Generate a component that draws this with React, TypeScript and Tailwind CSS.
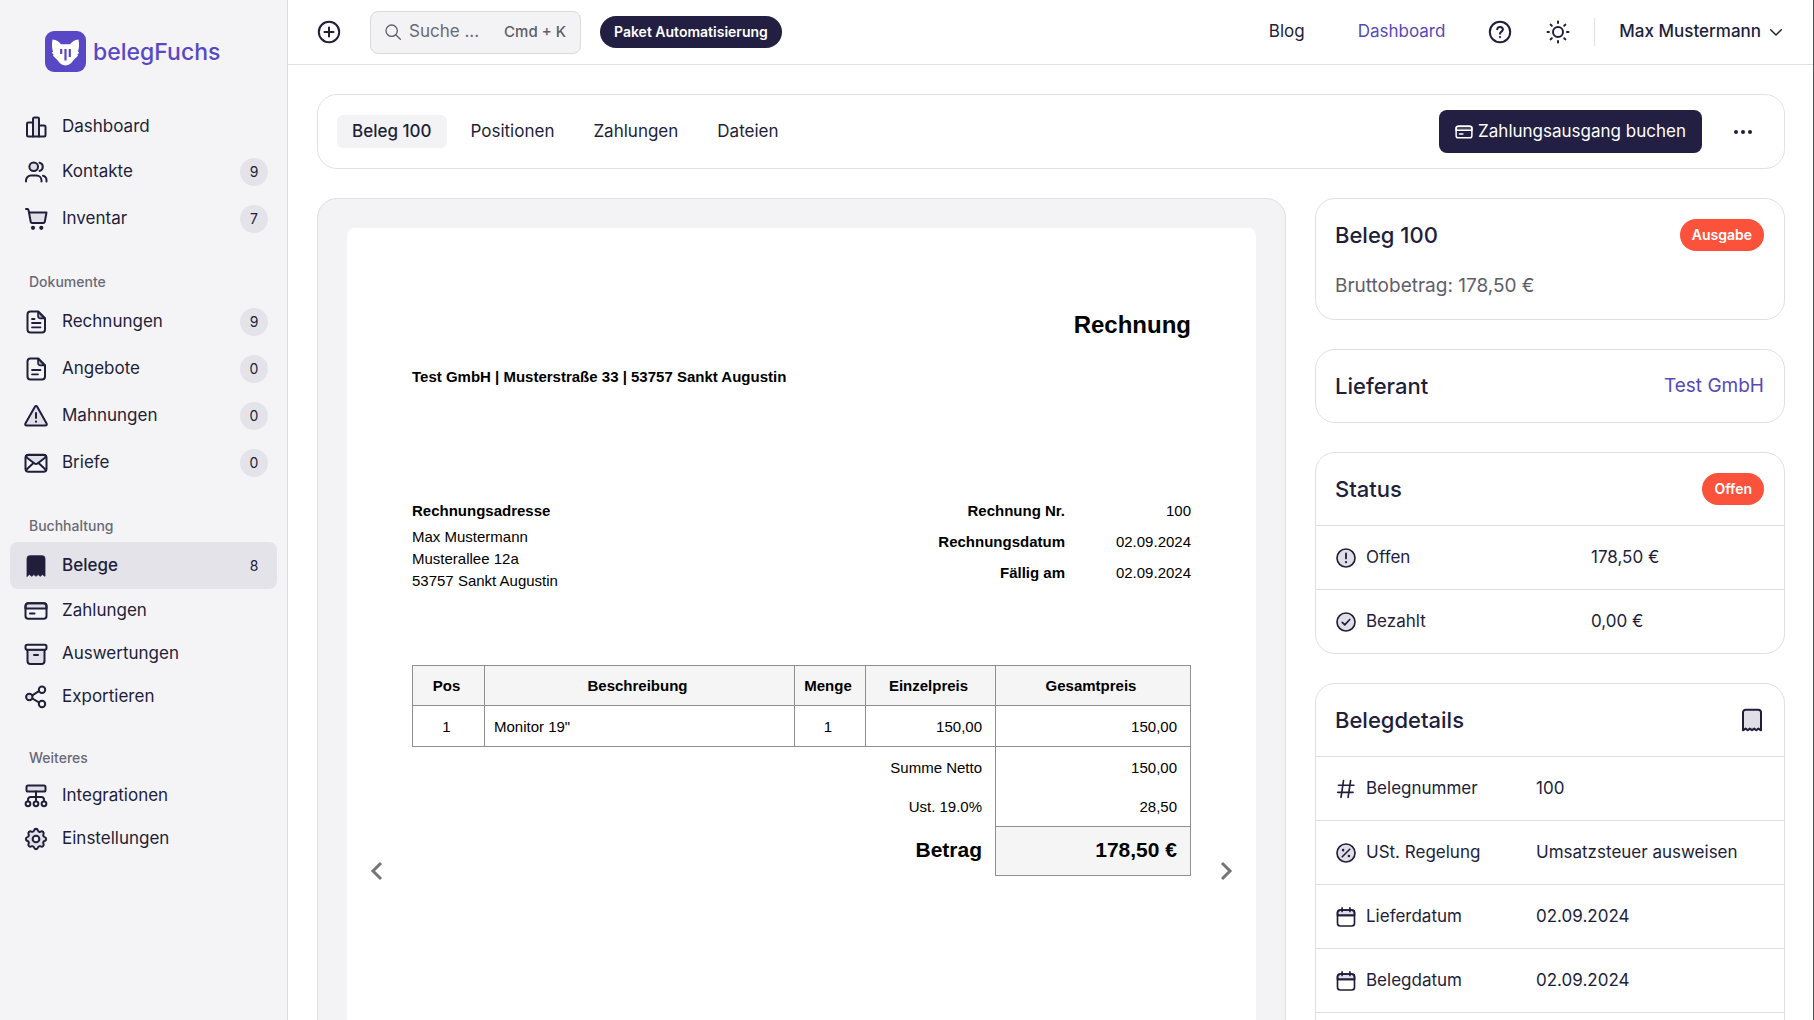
import type { ReactNode } from 'react'

type IconProps = {
  children: ReactNode
  className?: string
}

type NavItem = {
  label: string
  icon: ReactNode
  count?: number
  active?: boolean
}

type NavGroup = {
  title?: string
  items: NavItem[]
}

const Icon = ({ children, className = 'size-6' }: IconProps) => (
  <svg
    viewBox="0 0 24 24"
    fill="none"
    stroke="currentColor"
    strokeWidth={2}
    strokeLinecap="round"
    strokeLinejoin="round"
    aria-hidden="true"
    className={`shrink-0 ${className}`}
  >
    {children}
  </svg>
)

const soft = '#e0dfe7'

const ChartIcon = () => (
  <Icon>
    <path d="M9 3.8a1.3 1.3 0 0 1 1.3-1.3h3.4A1.3 1.3 0 0 1 15 3.8V21.500H9z" fill={soft} />
    <path d="M9 7.500H4.300A1.300 1.300 0 0 0 3 8.800v11.400a1.300 1.300 0 0 0 1.300 1.300H9zM15 10.500h5a1.500 1.500 0 0 1 1.500 1.500v8a1.500 1.500 0 0 1-1.500 1.500h-5z" />
  </Icon>
)

const UsersIcon = () => (
  <Icon>
    <circle cx="9.7" cy="6.8" r="4.3" fill={soft} />
    <path d="M2 21.500v-1a5 5 0 0 1 5-5h5.500a5 5 0 0 1 5 5v1M15.500 2.700a4.200 4.200 0 0 1 0 8.200M19 15.700a4.600 4.600 0 0 1 3.500 4.500v1.300" />
  </Icon>
)

const CartIcon = () => (
  <Icon>
    <path d="M5 5.500h17.500l-1.700 9.300a1.500 1.500 0 0 1-1.500 1.200H8.200a1.500 1.500 0 0 1-1.500-1.200z" fill={soft} />
    <path d="M2 2h1.400a1 1 0 0 1 1 .8L5 5.500" />
    <circle cx="9" cy="20.8" r="1.1" fill="currentColor" />
    <circle cx="17.3" cy="20.8" r="1.1" fill="currentColor" />
  </Icon>
)

const FileIcon = ({ full = false }: { full?: boolean }) => (
  <Icon>
    <path d="M6.500 1.500h7.800L21 8.200v11.300a3 3 0 0 1-3 3H6.500a3 3 0 0 1-3-3v-15a3 3 0 0 1 3-3z" />
    <path d="M14 1.800v4.400A2.200 2.200 0 0 0 16.200 8.400h4.500z" fill="#a9a7b8" strokeWidth={1.6} />
    {full && <path d="M8 9h2.500" strokeWidth={1.8} />}
    <path d={full ? 'M8 13h8.500M8 17.300h8.500' : 'M8 13h8.500M8 17.300h6'} strokeWidth={1.8} />
  </Icon>
)

const WarningIcon = () => (
  <Icon>
    <path d="M10.900 2.700a1.300 1.300 0 0 1 2.300 0l9.400 16.800a1.300 1.300 0 0 1-1.200 2H2.600a1.300 1.300 0 0 1-1.200-2z" fill={soft} />
    <path d="M12 9v5" />
    <path d="M12 17.600v.1" strokeWidth={2.2} />
  </Icon>
)

const MailIcon = () => (
  <Icon>
    <path d="M2 6l8.500 6.500a2.500 2.500 0 0 0 3 0L22 6a2.500 2.500 0 0 0-2.500-2h-15A2.500 2.500 0 0 0 2 6z" fill={soft} />
    <rect x="1.5" y="3.8" width="21" height="17" rx="3" />
    <path d="M2 19l7.500-7M22 19l-7.500-7" />
  </Icon>
)

const ReceiptIcon = ({ solid = false }: { solid?: boolean }) => (
  <Icon>
    <path
      d="M3 22.300V4.500A2.800 2.800 0 0 1 5.800 1.700h12.400A2.800 2.800 0 0 1 21 4.500v17.800l-2.600-1.700-2.200 1.700-2.100-1.700-2.100 1.700-2.100-1.700-2.100 1.700-2.200-1.700z"
      fill={solid ? 'currentColor' : soft}
      strokeWidth={solid ? 0.8 : 2}
    />
  </Icon>
)

const CardIcon = ({ className, tint = soft }: { className?: string; tint?: string }) => (
  <Icon className={className}>
    <path d="M4.300 4.300h15.400a2.800 2.800 0 0 1 2.800 2.800v2.500h-21V7.100a2.800 2.800 0 0 1 2.800-2.800z" fill={tint} />
    <rect x="1.500" y="4.300" width="21" height="15.400" rx="2.800" />
    <path d="M6 14.500h4.500" />
  </Icon>
)

const ArchiveIcon = () => (
  <Icon>
    <path d="M3.500 7.500h17V19a3 3 0 0 1-3 3h-11a3 3 0 0 1-3-3z" fill={soft} />
    <rect x="1.500" y="2.700" width="21" height="5" rx="1.800" fill="#f4f4f6" />
    <path d="M10 13h4" />
  </Icon>
)

const ShareIcon = () => (
  <Icon>
    <path d="M8.300 10.400l6.600-4.300M8.300 13.500l6.600 3.900" />
    <circle cx="5.300" cy="12" r="3.200" fill={soft} />
    <circle cx="18" cy="4.700" r="3.200" />
    <circle cx="18" cy="19" r="3.200" />
  </Icon>
)

const NetworkIcon = () => (
  <Icon>
    <rect x="2.500" y="1.500" width="19" height="6" rx="1.600" fill={soft} />
    <path d="M12 7.500v9M4 17v-1.200A2.800 2.800 0 0 1 6.800 13h10.400a2.800 2.800 0 0 1 2.800 2.800V17" />
    <circle cx="4" cy="19.800" r="2.400" />
    <circle cx="12" cy="19.800" r="2.400" />
    <circle cx="20" cy="19.800" r="2.400" />
  </Icon>
)

const GearIcon = () => (
  <Icon>
    <g transform="translate(12 12) scale(1.12) translate(-12 -12)" strokeWidth={1.8}>
      <path
        d="M10.300 4.300a1.750 1.750 0 0 1 3.400 0 1.720 1.720 0 0 0 2.600 1.070 1.750 1.750 0 0 1 2.370 2.370 1.720 1.720 0 0 0 1.060 2.570 1.750 1.750 0 0 1 0 3.400 1.720 1.720 0 0 0-1.060 2.570 1.750 1.750 0 0 1-2.370 2.370 1.720 1.720 0 0 0-2.570 1.060 1.750 1.750 0 0 1-3.400 0 1.720 1.720 0 0 0-2.570-1.060 1.750 1.750 0 0 1-2.370-2.370 1.720 1.720 0 0 0-1.060-2.570 1.750 1.750 0 0 1 0-3.400 1.720 1.720 0 0 0 1.060-2.570 1.750 1.750 0 0 1 2.370-2.370 1.720 1.720 0 0 0 2.540-1.070z"
        fill={soft}
      />
      <circle cx="12" cy="12" r="3" fill="#f4f4f6" />
    </g>
  </Icon>
)

const CalendarIcon = () => (
  <Icon className="size-5">
    <path d="M5 3.800h14A3.200 3.200 0 0 1 22.200 7v3H1.800V7A3.200 3.200 0 0 1 5 3.800z" fill={soft} />
    <rect x="1.800" y="3.800" width="20.400" height="19" rx="3.200" />
    <path d="M7.300 1v4.500M16.700 1v4.500M2 10h20" />
  </Icon>
)

const CircleIcon = ({ children }: { children: ReactNode }) => (
  <Icon className="size-5">
    <circle cx="12" cy="12" r="10.800" fill={soft} />
    {children}
  </Icon>
)

const navGroups: NavGroup[] = [
  {
    items: [
      { label: 'Dashboard', icon: <ChartIcon /> },
      { label: 'Kontakte', icon: <UsersIcon />, count: 9 },
      { label: 'Inventar', icon: <CartIcon />, count: 7 },
    ],
  },
  {
    title: 'Dokumente',
    items: [
      { label: 'Rechnungen', icon: <FileIcon full />, count: 9 },
      { label: 'Angebote', icon: <FileIcon />, count: 0 },
      { label: 'Mahnungen', icon: <WarningIcon />, count: 0 },
      { label: 'Briefe', icon: <MailIcon />, count: 0 },
    ],
  },
  {
    title: 'Buchhaltung',
    items: [
      { label: 'Belege', icon: <ReceiptIcon solid />, count: 8, active: true },
      { label: 'Zahlungen', icon: <CardIcon /> },
      { label: 'Auswertungen', icon: <ArchiveIcon /> },
      { label: 'Exportieren', icon: <ShareIcon /> },
    ],
  },
  {
    title: 'Weiteres',
    items: [
      { label: 'Integrationen', icon: <NetworkIcon /> },
      { label: 'Einstellungen', icon: <GearIcon /> },
    ],
  },
]

const Logo = () => (
  <a href="#" className="flex items-center gap-[7px] pl-[35px] text-[#5848c6]">
    <svg viewBox="0 0 41 41" className="size-[41px]" aria-hidden="true">
      <rect width="41" height="41" rx="9" fill="#5848c6" />
      <path
        d="M7.500 8.500c4 .4 6.500 2 8.500 4.800h9c2-2.800 4.700-4.400 8.500-4.800.8 4.500.7 8.500-.5 12l1.200 1.200-1.800 1.800.6 1c-1.500 2-3.400 3.300-4.600 4.800-1.800 3-4.500 5.200-7.900 5.200s-6.100-2.200-7.900-5.200c-1.200-1.500-3.100-2.800-4.600-4.800l.6-1-1.800-1.800L8 20.500c-1.200-3.500-1.300-7.500-.5-12z"
        fill="#fff"
      />
      <path d="M16.200 18v5M20.500 18v11.500M24.800 18v8" stroke="#5848c6" strokeWidth="2.2" />
    </svg>
    <span className="text-[23px] leading-[30px] font-medium">belegFuchs</span>
  </a>
)

const Sidebar = () => (
  <aside className="w-72 shrink-0 border-r border-[#d9d9df] bg-[#f4f4f6] px-2.5 pt-[31px]">
    <Logo />
    <nav className="mt-[33px]">
      {navGroups.map((group, i) => (
        <div key={i}>
          {group.title && (
            <h2 className="px-[19px] pt-[29px] pb-[5px] text-sm leading-[22px] font-medium text-[#6a6977]">{group.title}</h2>
          )}
          <ul>
            {group.items.map((item) => (
              <li key={item.label}>
                <a
                  href="#"
                  className={`flex items-center gap-3.5 rounded-lg pr-[9px] pl-3.5 ${
                    item.count === undefined ? 'h-[43px]' : 'h-[47px]'
                  } ${item.active ? 'bg-[#e4e3e9] font-medium' : ''}`}
                >
                  {item.icon}
                  <span className="flex-1">{item.label}</span>
                  {item.count !== undefined && (
                    <span className="flex size-7 items-center justify-center rounded-full bg-[#e4e3e9] text-sm font-normal">
                      {item.count}
                    </span>
                  )}
                </a>
              </li>
            ))}
          </ul>
        </div>
      ))}
    </nav>
  </aside>
)

const Header = () => (
  <header className="flex h-[65px] items-center justify-between border-b border-[#dfe2e4] pr-[29px] pl-[29px]">
    <div className="flex items-center">
      <button type="button" aria-label="Neu">
        <Icon>
          <circle cx="12" cy="12" r="10.200" />
          <path d="M12 7.500v9M7.500 12h9" />
        </Icon>
      </button>
      <label className="ml-[29px] flex h-[43px] w-[211px] items-center rounded-lg border border-[#dadade] bg-[#f3f3f5] px-3.5 text-[#5f5e6b]">
        <Icon className="size-4">
          <circle cx="10" cy="10" r="8.500" />
          <path d="M16.500 16.500L23 23" />
        </Icon>
        <input
          type="search"
          aria-label="Suche"
          placeholder="Suche ..."
          className="ml-2 w-0 flex-1 bg-transparent outline-none placeholder:text-[#6a6977]"
        />
        <kbd className="text-[15px] font-medium [font-family:Inter,sans-serif]">Cmd + K</kbd>
      </label>
      <button type="button" className="ml-[19px] h-8 rounded-full bg-[#221f43] px-3.5 text-sm font-semibold text-white">
        Paket Automatisierung
      </button>
    </div>
    <div className="flex items-center">
      <a href="#">Blog</a>
      <a href="#" className="ml-[53px] text-[#5848b8]">
        Dashboard
      </a>
      <button type="button" aria-label="Hilfe" className="ml-[43px]">
        <Icon>
          <circle cx="12" cy="12" r="10.200" />
          <path d="M9.200 9.300c.3-1.500 1.400-2.300 2.800-2.300 1.600 0 2.900 1 2.900 2.500 0 2-2.900 2.200-2.900 4.200" />
          <path d="M12 17v.1" strokeWidth={2.2} />
        </Icon>
      </button>
      <button type="button" aria-label="Farbschema" className="ml-[34px]">
        <Icon>
          <circle cx="12" cy="12" r="5" />
          <path d="M12 1.500v1.500M12 21v1.500M1.500 12H3M21 12h1.500M4.600 4.600l1.200 1.200M18.200 18.200l1.200 1.200M19.400 4.600l-1.200 1.200M5.800 18.200l-1.200 1.200" />
        </Icon>
      </button>
      <button type="button" className="ml-6 flex h-7 items-center border-l border-[#dfe2e4] pl-6 font-medium">
        Max Mustermann
        <Icon className="ml-[7px] size-4">
          <path d="M4 8.500l8 8 8-8" strokeWidth={2.2} />
        </Icon>
      </button>
    </div>
  </header>
)

const tabs = ['Beleg 100', 'Positionen', 'Zahlungen', 'Dateien']

const Toolbar = () => (
  <div className="flex h-[75px] items-center justify-between rounded-[20px] border border-[#e0e2e4] pr-5 pl-[19px]">
    <nav className="flex gap-[9px]">
      {tabs.map((tab, i) => (
        <a key={tab} href="#" className={`rounded-md px-[15px] py-1 leading-[25px] ${i === 0 ? 'bg-[#f3f3f5] font-medium' : ''}`}>
          {tab}
        </a>
      ))}
    </nav>
    <div className="flex items-center">
      <button type="button" className="flex h-[43px] items-center gap-[5px] rounded-lg bg-[#221f43] px-4 text-white">
        <CardIcon className="size-[18px]" tint="#4b4868" />
        Zahlungsausgang buchen
      </button>
      <button type="button" aria-label="Mehr" className="ml-[30px] mr-2.5">
        <svg viewBox="0 0 22 22" className="size-[22px]" fill="currentColor" aria-hidden="true">
          <circle cx="4" cy="11" r="2" />
          <circle cx="11" cy="11" r="2" />
          <circle cx="18" cy="11" r="2" />
        </svg>
      </button>
    </div>
  </div>
)

const invoiceMeta = [
  ['Rechnung Nr.', '100'],
  ['Rechnungsdatum', '02.09.2024'],
  ['Fällig am', '02.09.2024'],
]

const cell = 'border border-[#8f8f8f] pr-[13px] pl-[9px] pt-[2px]'

const Invoice = () => (
  <article className="relative aspect-[210/297] rounded-lg bg-white px-[65px] pt-[81px] text-[15px] text-black [font-family:'Liberation_Sans',Arial,sans-serif]">
    <h1 className="text-right text-2xl leading-8 font-bold">Rechnung</h1>
    <p className="mt-[25px] leading-[22px] font-bold">Test GmbH | Musterstraße 33 | 53757 Sankt Augustin</p>

    <div className="mt-28 flex items-start justify-between">
      <address className="leading-[22px] not-italic">
        <strong className="mb-1 block">Rechnungsadresse</strong>
        Max Mustermann
        <br />
        Musterallee 12a
        <br />
        53757 Sankt Augustin
      </address>
      <dl className="grid grid-cols-[auto_126px] gap-y-[9px] text-right leading-[22px]">
        {invoiceMeta.map(([label, value]) => (
          <div key={label} className="contents">
            <dt className="font-bold">{label}</dt>
            <dd>{value}</dd>
          </div>
        ))}
      </dl>
    </div>

    <table className="mt-[73px] w-full table-fixed border-collapse">
      <colgroup>
        <col className="w-[72px]" />
        <col />
        <col className="w-[71px]" />
        <col className="w-[130px]" />
        <col className="w-[195px]" />
      </colgroup>
      <thead>
        <tr className="h-10 bg-[#f5f5f5]">
          {['Pos', 'Beschreibung', 'Menge', 'Einzelpreis', 'Gesamtpreis'].map((title) => (
            <th key={title} className={cell}>
              {title}
            </th>
          ))}
        </tr>
      </thead>
      <tbody>
        <tr className="h-[41px]">
          <td className={`${cell} text-center`}>1</td>
          <td className={cell}>Monitor 19&quot;</td>
          <td className={`${cell} text-center`}>1</td>
          <td className={`${cell} text-right`}>150,00</td>
          <td className={`${cell} text-right`}>150,00</td>
        </tr>
      </tbody>
      <tfoot className="text-right">
        <tr className="h-10">
          <td colSpan={4} className="pt-0.5 pr-[13px]">
            Summe Netto
          </td>
          <td className="border-x border-[#8f8f8f] pt-0.5 pr-[13px]">150,00</td>
        </tr>
        <tr className="h-10">
          <td colSpan={4} className="pt-0.5 pr-[13px]">
            Ust. 19.0%
          </td>
          <td className="border-x border-[#8f8f8f] pt-0.5 pr-[13px]">28,50</td>
        </tr>
        <tr className="h-[49px] text-[21px] font-bold">
          <td colSpan={4} className="pr-[13px] pb-0.5">
            Betrag
          </td>
          <td className="border border-[#8f8f8f] bg-[#f5f5f5] pr-[13px] pb-0.5">178,50 €</td>
        </tr>
      </tfoot>
    </table>

    <button type="button" aria-label="Zurück" className="absolute top-1/2 left-5 -translate-y-1/2 text-[#757575]">
      <svg viewBox="0 0 20 20" className="size-5" fill="none" stroke="currentColor" strokeWidth="3" aria-hidden="true">
        <path d="M14 2l-8 8 8 8" />
      </svg>
    </button>
    <button type="button" aria-label="Weiter" className="absolute top-1/2 right-5 -translate-y-1/2 text-[#757575]">
      <svg viewBox="0 0 20 20" className="size-5" fill="none" stroke="currentColor" strokeWidth="3" aria-hidden="true">
        <path d="M6 2l8 8-8 8" />
      </svg>
    </button>
  </article>
)

const Card = ({ children, className = '' }: { children: ReactNode; className?: string }) => (
  <section className={`rounded-[20px] border border-[#dfe0e4] bg-white ${className}`}>{children}</section>
)

const CardHeader = ({ title, children }: { title: string; children: ReactNode }) => (
  <div className="flex h-[72px] items-center justify-between pr-5 pl-[19px]">
    <h2 className="text-[22px] leading-7 font-medium">{title}</h2>
    {children}
  </div>
)

const Badge = ({ children }: { children: ReactNode }) => (
  <span className="rounded-full bg-[#fb523b] px-3 py-1.5 text-sm font-semibold text-white">{children}</span>
)

type RowProps = {
  icon: ReactNode
  label: string
  value: string
  labelClass: string
}

const Row = ({ icon, label, value, labelClass }: RowProps) => (
  <div className="flex h-16 items-center border-t border-[#dfe0e4] px-5">
    <dt className={`flex shrink-0 items-center gap-2.5 ${labelClass}`}>
      {icon}
      {label}
    </dt>
    <dd>{value}</dd>
  </div>
)

const Details = () => (
  <aside className="flex w-[470px] shrink-0 flex-col gap-[29px]">
    <Card className="h-[122px]">
      <CardHeader title="Beleg 100">
        <Badge>Ausgabe</Badge>
      </CardHeader>
      <p className="px-[19px] text-[19px] leading-[30px] text-[#5f5e6b]">Bruttobetrag: 178,50 €</p>
    </Card>

    <Card>
      <CardHeader title="Lieferant">
        <a href="#" className="text-[19px] text-[#5848b8]">
          Test GmbH
        </a>
      </CardHeader>
    </Card>

    <Card>
      <CardHeader title="Status">
        <Badge>Offen</Badge>
      </CardHeader>
      <dl>
        <Row
          label="Offen"
          value="178,50 €"
          labelClass="w-[255px]"
          icon={
            <CircleIcon>
              <path d="M12 6.500v6" strokeWidth={2.2} />
              <path d="M12 17v.1" strokeWidth={2.6} />
            </CircleIcon>
          }
        />
        <Row
          label="Bezahlt"
          value="0,00 €"
          labelClass="w-[255px]"
          icon={
            <CircleIcon>
              <path d="M7.500 12.500l3 3 6-6.500" />
            </CircleIcon>
          }
        />
      </dl>
    </Card>

    <Card className="flex-1">
      <CardHeader title="Belegdetails">
        <button type="button" aria-label="Beleg anzeigen">
          <ReceiptIcon />
        </button>
      </CardHeader>
      <dl className="border-b border-[#dfe0e4]">
        <Row
          label="Belegnummer"
          value="100"
          labelClass="w-[200px]"
          icon={
            <Icon className="size-5">
              <path d="M9 2L6 22M17.500 2l-3 20M3 7.500h18.500M2 16h18.500" />
            </Icon>
          }
        />
        <Row
          label="USt. Regelung"
          value="Umsatzsteuer ausweisen"
          labelClass="w-[200px]"
          icon={
            <CircleIcon>
              <path d="M7.500 16.500l9-9" />
              <path d="M8.500 8.500v.1M15.500 15.500v.1" strokeWidth={3} />
            </CircleIcon>
          }
        />
        <Row label="Lieferdatum" value="02.09.2024" labelClass="w-[200px]" icon={<CalendarIcon />} />
        <Row label="Belegdatum" value="02.09.2024" labelClass="w-[200px]" icon={<CalendarIcon />} />
      </dl>
    </Card>
  </aside>
)

const App = () => {
  return (
    <div className="flex h-screen overflow-hidden border-r border-[#4a4d50] bg-white text-[17px] text-[#211e3b] [font-family:Inter,sans-serif]">
      <Sidebar />
      <div className="min-w-0 flex-1">
        <Header />
        <main className="space-y-[29px] py-[29px] pr-7 pl-[29px]">
          <Toolbar />
          <div className="flex gap-[29px]">
            <div className="min-w-0 flex-1 rounded-[20px] border border-[#dfe0e4] bg-[#f3f3f5] p-[29px]">
              <Invoice />
            </div>
            <Details />
          </div>
        </main>
      </div>
    </div>
  )
}

export default App
